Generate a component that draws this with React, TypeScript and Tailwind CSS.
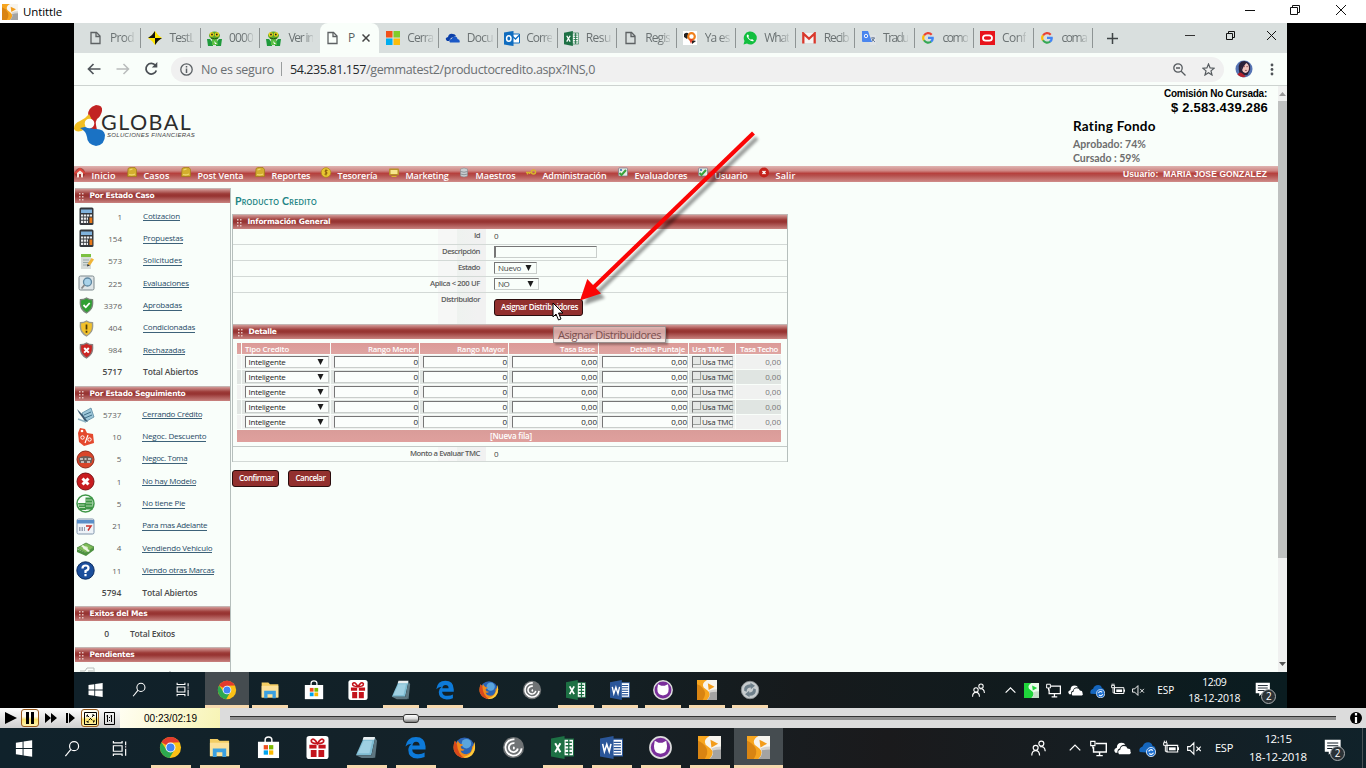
import React, { useLayoutEffect, useRef, useState } from "react";

/** Text whose letter spacing is adjusted so that it spans `w` pixels. */
function Fit({ w, className = "", children }: { w: number; className?: string; children: string }) {
  const ref = useRef<HTMLSpanElement>(null);
  const [ls, setLs] = useState(0);
  useLayoutEffect(() => {
    if (ref.current) {
      const natural = ref.current.getBoundingClientRect().width;
      setLs((w - natural) / children.length);
    }
  }, []);
  return (
    <span ref={ref} className={`inline-block whitespace-pre ${className}`} style={{ letterSpacing: `${ls}px` }}>
      {children}
    </span>
  );
}

/* ---------- favicons ---------- */

const svg = "block shrink-0";

const PageIcon = () => (
  <svg className={svg} width="14" height="16" viewBox="0 0 14 16" fill="none" stroke="#5d6163" strokeWidth="1.3">
    <path d="M2 2.500h5.500l3.500 3.500v7.500H2z" />
    <path d="M7 2.500v4h4" />
  </svg>
);
const TestIcon = () => (
  <svg className={svg} width="14" height="14" viewBox="0 0 14 14">
    <path d="M7 0l3 4 4 3-4 3-3 4-3-4-4-3 4-3z" fill="#ffe600" />
    <path d="M7 7H0l4-3 3-4zM7 7h7l-4 3-3 4z" fill="#111" />
  </svg>
);
const FrogIcon = () => (
  <svg className={svg} width="15" height="15" viewBox="0 0 15 15">
    <path d="M0 8l3 0 3 4v3H1zM15 8l-3 0-3 4v3h5z" fill="#1f9a3c" />
    <path d="M5 8h5l1 6H5z" fill="#5bbf45" />
    <path d="M7 10l3 3H8z" fill="#fff" />
    <ellipse cx="7.5" cy="4.500" rx="5.500" ry="4" fill="#5aa82f" />
    <circle cx="4.800" cy="3.500" r="2.200" fill="#f0d41c" />
    <circle cx="10" cy="3.500" r="2.200" fill="#f0d41c" />
    <circle cx="5" cy="3.500" r=".9" fill="#222" />
    <circle cx="9.800" cy="3.500" r=".9" fill="#222" />
    <path d="M4 7q3.500 1.500 7 0" stroke="#1c5a14" fill="none" />
  </svg>
);
const MsIcon = () => (
  <svg className={svg} width="14" height="14" viewBox="0 0 14 14">
    <path d="M0 0h6.500v6.500H0z" fill="#f1511b" />
    <path d="M7.500 0H14v6.500H7.500z" fill="#80cc28" />
    <path d="M0 7.500h6.500V14H0z" fill="#00adef" />
    <path d="M7.500 7.500H14V14H7.500z" fill="#fbbc09" />
  </svg>
);
const DriveIcon = () => (
  <svg className={svg} width="15" height="12" viewBox="0 0 15 12">
    <path d="M2 9Q-1 6 3 5q1-4 5-3 2 0 3 2L6 6 4 9z" fill="#0b3fa8" />
    <path d="M5 10.500Q3 7.500 6.500 7q1-3 4-2.500 2 .5 2 2.500 3 .5 2 3.500z" fill="#1b58c6" />
  </svg>
);
const OutlookIcon = () => (
  <svg className={svg} width="16" height="15" viewBox="0 0 16 15">
    <path d="M8 3h7.500v9H8z" fill="#fff" stroke="#0f6cbf" />
    <path d="M8 5l3.500 3L15.500 4" stroke="#0f6cbf" fill="none" strokeWidth="1.300" />
    <path d="M0 1.500L9.500 0v15L0 13.500z" fill="#0f6cbf" />
    <ellipse cx="4.800" cy="7.500" rx="2.200" ry="2.800" fill="none" stroke="#fff" strokeWidth="1.500" />
  </svg>
);
function OfficeIcon({ color, letter, s = 15 }: { color: string; letter: "X" | "W"; s?: number }) {
  return (
    <svg className={svg} width={s} height={s} viewBox="0 0 22 22">
      <path d="M11 3h10.500v16H11z" fill="#fff" stroke={color} />
      {letter === "X" ? (
        <path d="M14 6h6M14 9.300h6M14 12.600h6M14 16h6M17 3v16" stroke={color} strokeWidth="1.300" />
      ) : (
        <path d="M13 6h7M13 8.600h7M13 11.200h7M13 13.800h7M13 16.400h7" stroke={color} strokeWidth="1.200" />
      )}
      <path d="M0 2.500L13 0v22L0 19.500z" fill={color} />
      {letter === "X" ? (
        <path d="M4 7l5 8.500M9 7l-5 8.500" stroke="#fff" strokeWidth="1.900" />
      ) : (
        <path d="M2.500 7.500l1.700 7.500 2.300-7 2.300 7 1.700-7.500" stroke="#fff" strokeWidth="1.500" fill="none" />
      )}
    </svg>
  );
}
const YaIcon = () => (
  <svg className={svg} width="14" height="14" viewBox="0 0 14 14">
    <path d="M0 0h14v14H0z" fill="#fff" />
    <path d="M1 3q4-3 5 1L4 8 1 6zM9 9l4 1-4 3z" fill="#222" />
    <circle cx="8.500" cy="5.500" r="3.300" fill="none" stroke="#f07f1a" strokeWidth="2.200" />
    <path d="M6 8l2 5 2-5z" fill="#e2402b" />
  </svg>
);
const WhatsIcon = () => (
  <svg className={svg} width="14" height="14" viewBox="0 0 14 14">
    <path d="M0.500 13.500l1-3.500A6.500 6.500 0 1 1 4 12.600z" fill="#12bf3f" />
    <path d="M4.500 3.500q-2 1.500 1 4.500t5 2.200q1-1-1.500-2.200l-1 .8Q6 8 5.300 6l.7-1q-.6-2-1.500-1.500z" fill="#fff" />
  </svg>
);
const GmailIcon = () => (
  <svg className={svg} width="14" height="12" viewBox="0 0 14 12">
    <path d="M0 1h14v10H0z" fill="#f4f4f4" />
    <path d="M1.300 11.500V1.500L7 6.800l5.700-5.300v10" fill="none" stroke="#d8382c" strokeWidth="2.300" />
  </svg>
);
const TranslateIcon = () => (
  <svg className={svg} width="14" height="14" viewBox="0 0 14 14">
    <path d="M6 4h8v10H8z" fill="#dfe3e6" />
    <path d="M9 7h4M11 6v1M9.500 11l3-4M10 8l3 3" stroke="#6d7f98" fill="none" />
    <path d="M0 0h6l4 11H1q-1 0-1-1z" fill="#4a86ee" />
    <circle cx="4" cy="5" r="1.700" fill="none" stroke="#fff" strokeWidth=".9" />
  </svg>
);
const GoogleIcon = () => (
  <svg className={svg} width="12" height="12" viewBox="0 0 12 12" fill="none" strokeWidth="2.200">
    <path d="M9.700 2.700A4.800 4.800 0 0 0 2 3.500" stroke="#ea4335" />
    <path d="M2 3.300a4.800 4.800 0 0 0 0 5.200" stroke="#fbbc05" />
    <path d="M2 8.300a4.800 4.800 0 0 0 7.200 1.200" stroke="#34a853" />
    <path d="M9 9.700Q11 8 10.700 5.800H6" stroke="#4285f4" />
  </svg>
);
const OracleIcon = () => (
  <svg className={svg} width="15" height="14" viewBox="0 0 15 14">
    <path d="M0 0h15v14H0z" fill="#e8141b" />
    <rect x="3" y="4.300" width="9" height="5.400" rx="2.700" fill="none" stroke="#fff" strokeWidth="1.800" />
  </svg>
);

const tabs: { icon: React.ReactNode; label: string; w?: number; active?: boolean; bar?: boolean }[] = [
  { icon: <PageIcon />, label: "Prod", bar: true },
  { icon: <TestIcon />, label: "TestL", w: 25, bar: true },
  { icon: <FrogIcon />, label: "0000", w: 24, bar: true },
  { icon: <FrogIcon />, label: "Ver in" , w: 25 },
  { icon: <PageIcon />, label: "P", active: true },
  { icon: <MsIcon />, label: "Cerra", w: 26, bar: true },
  { icon: <DriveIcon />, label: "Docu", w: 26, bar: true },
  { icon: <OutlookIcon />, label: "Corre", w: 26, bar: true },
  { icon: <OfficeIcon color="#1d7044" letter="X" />, label: "Resu", w: 25, bar: true },
  { icon: <PageIcon />, label: "Regis", w: 25, bar: true },
  { icon: <YaIcon />, label: "Ya es", w: 25, bar: true },
  { icon: <WhatsIcon />, label: "What", w: 25, bar: true },
  { icon: <GmailIcon />, label: "Recib", w: 25, bar: true },
  { icon: <TranslateIcon />, label: "Tradu", w: 25, bar: true },
  { icon: <GoogleIcon />, label: "como", w: 25, bar: true },
  { icon: <OracleIcon />, label: "Conf", w: 24, bar: true },
  { icon: <GoogleIcon />, label: "coma", w: 25, bar: true },
];

const WinControls = ({ className = "" }: { className?: string }) => (
  <svg className={`${svg} ${className}`} width="102" height="12" viewBox="0 0 102 12" fill="none" stroke="#111" strokeWidth="1">
    <path d="M0 6.500h10" />
    <path d="M45.500 3.500h7v7h-7zM47.500 3.500v-2h7v7h-2" />
    <path d="M91 1l10 10M101 1L91 11" />
  </svg>
);

function BrowserTabs() {
  return (
    <div className="flex h-[30px] items-stretch bg-[#d9dfde] pl-[8px]">
      <div className="flex w-[1011px]">
        {tabs.map((t, i) => (
          <div
            key={i}
            className={
              t.active
                ? "flex flex-1 items-center rounded-t-lg bg-[#f9fefa] pl-[6px]"
                : "flex flex-1 items-center pl-[6px]"
            }
          >
            <div className="flex w-[15px] justify-center">{t.icon}</div>
            {t.active ? (
              <>
                <span className="ml-[7px] text-[12px] text-[#5a5f61]">{t.label}</span>
                <svg className="ml-[7px] block" width="8" height="8" viewBox="0 0 8 8" stroke="#444" strokeWidth="1.500">
                  <path d="M.5.5l7 7M7.500.500l-7 7" />
                </svg>
              </>
            ) : (
              <Fit
                w={t.w ?? 24}
                className="ml-[7px] text-[12px] text-[#6b7273] [mask-image:linear-gradient(to_right,black_60%,rgba(0,0,0,0.200))]"
              >
                {t.label}
              </Fit>
            )}
            {t.bar && <div className="ml-auto h-[20px] w-px bg-[#8e9494]" />}
          </div>
        ))}
      </div>
      <svg className="mt-[10px] ml-[14px] block" width="11" height="11" viewBox="0 0 11 11" stroke="#3f4446" strokeWidth="1.500">
        <path d="M5.500 0v11M0 5.500h11" />
      </svg>
      <svg className="mt-[6px] ml-[67px] block" width="93" height="13" viewBox="0 0 93 13" fill="none" stroke="#111" strokeWidth="1">
        <path d="M0 6.500h10" stroke="#333" />
        <path d="M41.500 4.500h6v6h-6zM43.500 4.500v-2h6v6h-2" />
        <path d="M82 2l9 9M91 2l-9 9" />
      </svg>
    </div>
  );
}

function Toolbar() {
  return (
    <div className="flex h-[33px] items-center border-b border-[#cdd3d0] bg-[#f9fefa] pl-[13px]">
      <svg className="block" width="14" height="12" viewBox="0 0 14 12" fill="none" stroke="#50555a" strokeWidth="1.700">
        <path d="M13.500 6H1.500M6.500 1l-5 5 5 5" />
      </svg>
      <svg className="ml-[15px] block" width="14" height="12" viewBox="0 0 14 12" fill="none" stroke="#b9bcbc" strokeWidth="1.500">
        <path d="M.5 6h12M7.500 1l5 5-5 5" />
      </svg>
      <svg className="ml-[14px] block" width="14" height="14" viewBox="0 0 14 14" fill="none" stroke="#4a4f54" strokeWidth="1.800">
        <path d="M11.500 3.500A5.300 5.300 0 1 0 12.300 8.500" />
        <path d="M13.300 0v5.500H7.800z" fill="#4a4f54" stroke="none" />
      </svg>
      <div className="ml-[13px] flex h-[25px] w-[1053px] items-center rounded-full bg-[#f0f0f0] pl-[9px] text-[12.500px] text-[#6a6f72]">
        <svg className="block" width="13" height="13" viewBox="0 0 13 13" fill="none" stroke="#5b6064" strokeWidth="1.300">
          <circle cx="6.500" cy="6.500" r="5.700" />
          <path d="M6.500 5.500V10M6.500 3v1.500" strokeWidth="1.500" />
        </svg>
        <Fit w={73} className="mt-[2px] ml-[8px]">No es seguro</Fit>
        <div className="mr-[8px] ml-[7px] h-[14px] w-px bg-[#9a9d9e]" />
        <Fit w={76} className="mt-[2px] text-[#24282b]">54.235.81.157</Fit>
        <Fit w={229} className="mt-[2px]">/gemmatest2/productocredito.aspx?INS,0</Fit>
        <svg className="ml-auto block" width="13" height="13" viewBox="0 0 13 13" fill="none" stroke="#555a5e" strokeWidth="1.300">
          <circle cx="5" cy="5" r="4.200" />
          <path d="M8.200 8.200l4.300 4.300M3 5h4" />
        </svg>
        <svg className="mr-[9px] ml-[16px] block" width="13" height="13" viewBox="0 0 13 13" fill="none" stroke="#555a5e" strokeWidth="1.200">
          <path d="M6.500 1l1.600 3.900 4.100.3-3.200 2.700 1 4.100-3.500-2.200L3 12l1-4.100L.8 5.200l4.100-.3z" />
        </svg>
      </div>
      <svg className="ml-[11px] block" width="18" height="18" viewBox="0 0 19 19">
        <circle cx="9.500" cy="9.500" r="9" fill="#5674b4" />
        <path d="M4 10Q3 1 10 1q7 1 6 9l-3 6H5z" fill="#2a2038" />
        <ellipse cx="11" cy="8.500" rx="3.800" ry="5.300" fill="#efc4be" />
        <path d="M2.500 15q3-3 5-1l4 3.500q-6 2-9-2.500z" fill="#b3202c" />
        <path d="M7 3h5l-3 4-2 5z" fill="#2a2038" />
        <path d="M9 7h1.500M12 7h1.500M10.500 11h2" stroke="#7a2f3a" strokeWidth=".8" />
      </svg>
      <svg className="ml-[17px] block" width="4" height="13" viewBox="0 0 4 13" fill="#4f5458">
        <circle cx="2" cy="2" r="1.400" />
        <circle cx="2" cy="6.500" r="1.400" />
        <circle cx="2" cy="11" r="1.400" />
      </svg>
    </div>
  );
}

/* ---------- page header ---------- */

const Logo = () => (
  <svg className={svg} width="32" height="42" viewBox="0 0 32 42">
    <path d="M14 11Q13 3 22 0q7 0 6 6-1 5-5 8-2 3-1 6l1 5H16z" fill="#c22423" />
    <path d="M0 24q0-6 6-8 6-3 9-7l3 6-6 4-1 5q-8 5-11 0z" fill="#f2bf22" />
    <path d="M6 23l5-1 9 2q10-1 11 6 0 10-9 11-9-2-9-9-1-6-7-9z" fill="#1a72c4" />
    <circle cx="15.500" cy="18.500" r="4.800" fill="#f9fefa" />
  </svg>
);

const navIcons = {
  home: (
    <>
      <circle cx="5.500" cy="6" r="5" fill="#8c2a24" opacity=".7" />
      <path d="M0 6l5.500-5.500L11 6l-1.500 1L5.500 3.500 1.500 7z" fill="#e2443a" />
      <path d="M2.500 6l3-2.500 3 2.500v4.500h-6z" fill="#f6e6de" />
      <path d="M4.500 7h2v3.500h-2z" fill="#a33" />
    </>
  ),
  doc: (
    <>
      <path d="M1.500 1.500l2-1 5 0 1.500 2v7h-9z" fill="#d3ae2e" stroke="#9f7a18" strokeWidth=".7" />
      <path d="M3 3l3-1M2.500 7.500q3 1 6-.500" stroke="#efd873" strokeWidth="1.200" fill="none" />
    </>
  ),
  coin: (
    <>
      <circle cx="5.500" cy="5.500" r="4.800" fill="#e8c630" stroke="#a78618" strokeWidth=".7" />
      <path d="M7 3.500Q4.500 2.500 4.500 4t2 1.500q1 1.500-2.500 1.700M5.500 2.500v6" stroke="#8a5c10" fill="none" />
    </>
  ),
  tv: (
    <>
      <rect x=".5" y="1.500" width="10" height="7" rx="1" fill="#b8912a" />
      <rect x="2" y="3" width="7" height="4" fill="#f6e58c" />
      <path d="M3 9.500h5" stroke="#d9b32c" />
    </>
  ),
  db: (
    <>
      <path d="M2 2q3.500-2 7 0v7q-3.500 2-7 0z" fill="#c9cdd0" stroke="#858b90" strokeWidth=".6" />
      <path d="M2 4.500q3.500 1.500 7 0M2 7q3.500 1.500 7 0" stroke="#7c8388" fill="none" strokeWidth=".8" />
    </>
  ),
  key: (
    <>
      <circle cx="8" cy="5" r="2" fill="none" stroke="#d8b52c" strokeWidth="1.500" />
      <path d="M6 5.500H.5M2 5.500v2M4 5.500v1.500" stroke="#d8b52c" strokeWidth="1.300" />
    </>
  ),
  check: (
    <>
      <rect x="1" y="1" width="9" height="8" rx="1" fill="#e6ece6" stroke="#778" strokeWidth=".7" />
      <path d="M2 6l2 2 4.500-5" stroke="#3aa33a" strokeWidth="2" fill="none" />
      <circle cx="3.500" cy="3" r="1.100" fill="#3a70b8" />
    </>
  ),
  exit: (
    <>
      <circle cx="5.500" cy="5.500" r="5" fill="#c4211a" />
      <path d="M4 4l3 3M7 4L4 7" stroke="#fff" strokeWidth="1.400" />
    </>
  ),
};

const nav: { k: keyof typeof navIcons; label: string; w: number; cls: string }[] = [
  { k: "home", label: "Inicio", w: 24, cls: "w-[52px]" },
  { k: "doc", label: "Casos", w: 26, cls: "w-[54px]" },
  { k: "doc", label: "Post Venta", w: 46, cls: "w-[74px]" },
  { k: "doc", label: "Reportes", w: 39, cls: "w-[66px]" },
  { k: "coin", label: "Tesorería", w: 40, cls: "w-[68px]" },
  { k: "tv", label: "Marketing", w: 43, cls: "w-[70px]" },
  { k: "db", label: "Maestros", w: 40, cls: "w-[67px]" },
  { k: "key", label: "Administración", w: 64, cls: "w-[92px]" },
  { k: "check", label: "Evaluadores", w: 53, cls: "w-[80px]" },
  { k: "check", label: "Usuario", w: 33, cls: "w-[61px]" },
  { k: "exit", label: "Salir", w: 20, cls: "w-[40px]" },
];

function PageHeader() {
  return (
    <>
      <div className="flex h-[80px] justify-between">
        <div className="flex pt-[19px]">
          <Logo />
          <div className="-ml-[5px] flex flex-col pt-[7px]">
            <Fit w={96} className="h-[20px] font-['Lato'] text-[21.500px] leading-[20px] text-[#2d2d2d]">GLOBAL</Fit>
            <Fit w={88} className="ml-[6px] h-[8px] font-['Liberation_Sans'] text-[6px] leading-[6px] text-[#444] italic">
              SOLUCIONES FINANCIERAS
            </Fit>
          </div>
        </div>
        <div className="mr-[10px] flex flex-col">
          <div className="flex flex-col items-end font-['Liberation_Sans'] font-bold text-black">
            <Fit w={103} className="mt-[2px] mr-px text-[10px] leading-[12px]">Comisión No Cursada:</Fit>
            <Fit w={97} className="text-[13px] leading-[15px]">$ 2.583.439.286</Fit>
          </div>
          <div className="-ml-[91px] flex flex-col items-start font-['Lato'] font-bold">
            <Fit w={83} className="mt-[3px] text-[13.500px] leading-[17px] text-black">Rating Fondo</Fit>
            <Fit w={73} className="mt-[2px] text-[10.500px] leading-[14px] text-[#6d6d6d]">Aprobado: 74%</Fit>
            <Fit w={67} className="text-[10.500px] leading-[14px] text-[#6d6d6d]">Cursado : 59%</Fit>
          </div>
        </div>
      </div>
      <div className="flex h-[16px] shrink-0 bg-[linear-gradient(#dfb4b1_0%,#cf8683_30%,#b6403d_46%,#b5504d_60%,#d08d8a_100%)]">
        {nav.map((n) => (
          <div key={n.label} className={`flex shrink-0 ${n.cls}`}>
            <svg className="mt-px block shrink-0" width="12" height="11" viewBox="0 0 11 11">
              {navIcons[n.k]}
            </svg>
            <Fit w={n.w} className="ml-[5.500px] text-[9px] leading-[19px] font-semibold text-white">
              {n.label}
            </Fit>
          </div>
        ))}
        <div className="mr-[11px] ml-auto flex font-['Liberation_Sans'] font-bold text-white">
          <Fit w={144} className="text-[8.500px] leading-[17px]">{"Usuario:  MARIA JOSE GONZALEZ"}</Fit>
        </div>
      </div>
    </>
  );
}

/* ---------- sidebar ---------- */

function Bar({ title, w, className = "" }: { title: string; w: number; className?: string }) {
  return (
    <div
      className={`flex h-[15px] shrink-0 items-center border-t border-[#c4b5b2] bg-[linear-gradient(#d39a97_0%,#9c3a37_35%,#963331_50%,#c98380_100%)] pl-[4px] ${className}`}
    >
      <svg className="mt-[3px] block" width="5" height="9" viewBox="0 0 5 9" fill="#e6c3c1">
        <path d="M0 0h1.500v1.500H0zM3 0h1.500v1.500H3zM0 3h1.500v1.500H0zM3 3h1.500v1.500H3zM0 6h1.500v1.500H0zM3 6h1.500v1.500H3z" />
      </svg>
      <Fit w={w} className="ml-[5.500px] font-['DejaVu_Sans'] text-[7.500px] leading-[12px] font-bold text-white">
        {title}
      </Fit>
    </div>
  );
}

const calc = (
  <>
    <rect x="2.500" y=".5" width="14" height="17.500" rx="1.500" fill="#34383d" />
    <rect x="4" y="2.500" width="11" height="3.500" fill="#7fb2dc" />
    <path d="M4 8.500h11M4 11.700h7M4 14.900h7" stroke="#eceeee" strokeWidth="2.200" strokeDasharray="2.300 .7" />
    <rect x="12.500" y="10.500" width="2.800" height="5.500" fill="#e8791a" />
  </>
);
const shield = (c: string, d: string, mark: React.ReactNode) => (
  <>
    <path
      d="M9.500 2Q12 3.800 15.500 3.800q.5 6-1.200 8.700-1.800 2.800-4.800 4.500-3-1.700-4.800-4.500Q3 9.800 3.500 3.800 7 3.800 9.500 2z"
      fill={c}
      stroke={d}
      strokeWidth="1.400"
    />
    {mark}
  </>
);

const stateIcons: React.ReactNode[] = [
  calc,
  calc,
  <>
    <path d="M4 2h10v15H4z" fill="#d6dbd8" />
    <path d="M4 2h10v3H4z" fill="#7cc142" />
    <path d="M6 8h6M6 10.500h6M6 13h5" stroke="#9aa" />
    <path d="M10.500 12l4-6 2.500 1.500-4 6z" fill="#f0b53a" />
    <path d="M10.500 12l-.5 2.500 3-1z" fill="#333" />
  </>,
  <>
    <rect x="2" y="2" width="15" height="14" rx="1.500" fill="#dfe6e8" stroke="#7c888c" />
    <circle cx="10.500" cy="8" r="4" fill="#a9d3ea" stroke="#5f87a0" strokeWidth="1.300" />
    <path d="M7.500 11l-3 3.500" stroke="#888" strokeWidth="1.800" />
  </>,
  shield("#2fa032", "#7a857a", <path d="M6.500 9l2.300 2.300L12.700 7" stroke="#fff" strokeWidth="1.800" fill="none" />),
  shield("#f2c12a", "#9b9a8c", <path d="M9.500 5.500v5M9.500 11.800v2" stroke="#4a3a08" strokeWidth="1.700" />),
  shield("#cc2522", "#8a7d7d", <path d="M7.200 7l4.600 4.600M11.800 7l-4.600 4.600" stroke="#fff" strokeWidth="2" />),
];
const followIcons: React.ReactNode[] = [
  <>
    <path d="M6 8l9-5 3 9-9 5z" fill="#9cc6d8" stroke="#5d8ca2" strokeWidth=".8" />
    <path d="M8 10l7-3M9 13l7-3" stroke="#3f6f88" />
    <path d="M1 4l6 6 5 7-3-1-6-8z" fill="#3c5a72" />
    <path d="M2 14l8 3" stroke="#8fb4c4" strokeWidth="1.500" />
  </>,
  <>
    <path d="M4 1l5 1 2 4 6 1 1 9-10 3-5-4-1-9z" fill="#e4492e" />
    <circle cx="6" cy="4" r="1.300" fill="#fff" />
    <circle cx="6.500" cy="10.500" r="1.700" fill="none" stroke="#fff" />
    <circle cx="13.500" cy="12.500" r="1.700" fill="none" stroke="#fff" />
    <path d="M12 8l-3 8" stroke="#fff" strokeWidth="1.200" />
  </>,
  <>
    <circle cx="9.500" cy="9.500" r="8.500" fill="#d9452a" stroke="#8f2b1b" />
    <path d="M2.500 8q3-2 7-2t7 2l-1 5h-12z" fill="#6b5f5b" />
    <path d="M4 9h3M8.500 9h2M12 9h3M5 12h3M11 12h3" stroke="#ddd" strokeWidth="1.300" />
  </>,
  <>
    <circle cx="9.500" cy="9.500" r="8.500" fill="#c81d20" stroke="#7c1214" />
    <path d="M6.500 6.500l6 6M12.500 6.500l-6 6" stroke="#fff" strokeWidth="3" />
  </>,
  <>
    <circle cx="9.500" cy="9.500" r="8.500" fill="none" stroke="#3f9647" strokeWidth="1.500" />
    <path d="M2 9h8v7H4zM9.500 3.500h7v12h-7z" fill="#3f9647" />
    <path d="M2.500 11h6M3 13.500h6M10 6h6M10 9h6M10 12h6" stroke="#cfe9c6" strokeWidth=".8" />
  </>,
  <>
    <rect x="1" y="2" width="17" height="15" rx="1.500" fill="#eef3f8" stroke="#8296ad" />
    <path d="M1 3h17v3.500H1z" fill="#5a8fc8" />
    <path d="M3 11h6M3 13h6" stroke="#7a869a" strokeDasharray="1.500 1" strokeWidth="1.300" />
    <path d="M10 9h5l-3 4.500" stroke="#c8322c" fill="none" strokeWidth="1.500" />
  </>,
  <>
    <path d="M1 9l9-5 8 4-8 6z" fill="#7dbb57" stroke="#44803a" strokeWidth=".8" />
    <path d="M1 10v3l9 4 8-6V8l-8 6z" fill="#4d9140" />
    <ellipse cx="9.500" cy="9" rx="2.500" ry="1.700" fill="#d4ecc0" />
    <path d="M5 7l7 6 2-1-7-6z" fill="#eef5e6" />
  </>,
  <>
    <circle cx="9.500" cy="9.500" r="8.700" fill="#1c4f9c" stroke="#0c2c60" />
    <path d="M6.500 7.500q0-3 3-3t3 2.500q0 2-3 3v2M9.500 13v2.300" stroke="#fff" strokeWidth="2.200" fill="none" />
  </>,
];

type Row = [string, string, number];
const states: Row[] = [
  ["1", "Cotizacion", 37],
  ["154", "Propuestas", 40],
  ["573", "Solicitudes", 39],
  ["225", "Evaluaciones", 46],
  ["3376", "Aprobadas", 39],
  ["404", "Condicionadas", 52],
  ["984", "Rechazadas", 42],
];
const follow: Row[] = [
  ["5737", "Cerrando Crédito", 60],
  ["10", "Negoc. Descuento", 64],
  ["5", "Negoc. Toma", 45],
  ["1", "No hay Modelo", 54],
  ["5", "No tiene Pie", 43],
  ["21", "Para mas Adelante", 65],
  ["4", "Vendiendo Vehiculo", 70],
  ["11", "Viendo otras Marcas", 72],
];

function SideRows({ rows, icons, total, pad }: { rows: Row[]; icons: React.ReactNode[]; total: string; pad: string }) {
  return (
    <>
      {rows.map(([n, label, w], i) => (
        <div key={label} className={`flex h-[22.300px] items-center ${pad}`}>
          <svg className="block shrink-0" width="19" height="19" viewBox="0 0 19 19">
            {icons[i]}
          </svg>
          <span className="w-[26px] text-right text-[8px] leading-[10px] text-[#5f5f5f]">{n}</span>
          <Fit w={w} className="ml-[21px] border-b border-[#3d6279] text-[8px] leading-[8.500px] text-[#1f4a66]">
            {label}
          </Fit>
        </div>
      ))}
      <div className={`flex h-[22.300px] items-center text-[8.500px] font-semibold text-[#4a4a4a] ${pad}`}>
        <span className="w-[45px] text-right">{total}</span>
        <Fit w={55} className="ml-[21px]">Total Abiertos</Fit>
      </div>
    </>
  );
}

function Sidebar() {
  return (
    <div className="flex w-[157px] shrink-0 flex-col overflow-hidden border-r border-[#b6bfbc] pl-px">
      <Bar title="Por Estado Caso" w={65} />
      <div className="h-[182.500px] shrink-0 pt-[2.500px]">
        <SideRows rows={states} icons={stateIcons} total="5717" pad="pl-[2px]" />
      </div>
      <Bar title="Por Estado Seguimiento" w={96} />
      <div className="h-[205px] shrink-0 pt-[3px]">
        <SideRows rows={follow} icons={followIcons} total="5794" pad="pl-[1.300px]" />
      </div>
      <Bar title="Exitos del Mes" w={58} />
      <div className="flex h-[26px] shrink-0 items-center pt-px text-[8.500px] font-semibold text-[#4a4a4a]">
        <span className="w-[34px] text-right">0</span>
        <Fit w={45} className="ml-[21px]">Total Exitos</Fit>
      </div>
      <Bar title="Pendientes" w={45} />
      <svg className="mt-[5px] ml-[4px] block shrink-0" width="92" height="16" viewBox="0 0 92 16" fill="none" stroke="#b9bebc">
        <path d="M1 4h5l2-3h7v15M9 4h5" />
        <path d="M91 4.500v2" stroke="#555" />
      </svg>
    </div>
  );
}

/* ---------- product form ---------- */

const sunken = "border border-t-[#767676] border-l-[#767676] border-r-[#c9cecb] border-b-[#c9cecb]";

function Button({ label, w, className }: { label: string; w: number; className: string }) {
  return (
    <button
      className={`flex h-[17px] items-center justify-center rounded-[3px] border border-[#2a0d0d] bg-[#92302e] pb-[2px] pl-[2px] text-[8px] leading-[10px] font-semibold text-white ${className}`}
    >
      <Fit w={w}>{label}</Fit>
    </button>
  );
}

function Field({ label, w, h, last, children }: { label: string; w: number; h: string; last?: boolean; children: React.ReactNode }) {
  return (
    <div className={`flex shrink-0 ${h} ${last ? "" : "border-b border-[#d3d9d6]"}`}>
      <div className="flex w-[253px] justify-end bg-[linear-gradient(to_right,transparent_205px,#f6f7f6_205px,#f6f7f6_224px,#eef2ef_224px,#f1f1f1_245px)] pr-[6px]">
        <Fit w={w} className="mt-px h-[10px] text-[7.700px] leading-[10px] font-semibold text-[#5d5d5d]">{label}</Fit>
      </div>
      <div className="flex items-center pb-[2px] pl-[8px] text-[8px] leading-[10px] text-[#444]">{children}</div>
    </div>
  );
}

const Caret = () => (
  <svg className="mr-[4px] ml-auto block shrink-0" width="7" height="6" viewBox="0 0 7 6">
    <path d="M.5 0h6L3.500 6z" fill="#1d1d1d" />
  </svg>
);

const gridCols = "grid grid-cols-[4px_88px_88px_88px_89px_89px_46px_45px] gap-x-px";
const headCell = "flex items-center bg-[linear-gradient(#dc9a97,#dfa5a2)] text-[7.800px] leading-[10px] font-semibold text-white";

function Detail() {
  const heads: [string, number, string][] = [
    ["Tipo Credito", 44, "pl-[3px]"],
    ["Rango Menor", 48, "justify-end pr-[3px]"],
    ["Rango Mayor", 48, "justify-end pr-[3px]"],
    ["Tasa Base", 35, "justify-end pr-[3px]"],
    ["Detalle Puntaje", 55, "justify-end pr-[3px]"],
    ["Usa TMC", 32, "pl-[3px]"],
    ["Tasa Techo", 38, "justify-end pr-[3px]"],
  ];
  return (
    <div className="w-[544px] pt-[4px]">
      <div className={`${gridCols} h-[11px]`}>
        <div className={headCell} />
        {heads.map(([t, w, c]) => (
          <div key={t} className={`${headCell} ${c}`}>
            <Fit w={w}>{t}</Fit>
          </div>
        ))}
      </div>
      {[0, 1, 2, 3, 4].map((r) => {
        const cell = r % 2 ? "bg-[#e0e5e2]" : "bg-[#f0f1f0]";
        const num = (v: string) => (
          <div className={`${cell} py-px pl-[3px]`}>
            <div className={`${sunken} flex h-[12px] items-center justify-end bg-[#fbfefc] text-[8px] leading-[10px] text-[#222]`}>{v}</div>
          </div>
        );
        return (
          <div key={r} className={`${gridCols} mt-px h-[14.100px]`}>
            <div className={cell} />
            <div className={`${cell} py-px pr-[1px] pl-[3px]`}>
              <div className={`${sunken} flex h-[12px] items-center bg-[#fbfefc] pl-[2.500px] text-[8px] leading-[10px] text-[#222]`}>
                <Fit w={37}>Inteligente</Fit>
                <Caret />
              </div>
            </div>
            {num("0")}
            {num("0")}
            {num("0,00")}
            {num("0,00")}
            <div className={`${cell} py-px pr-[2px] pl-[3px]`}>
              <div className={`${sunken} flex h-[12px] text-[8px] leading-[10px] text-[#333]`}>
                <div className="h-[8px] w-[8px] shrink-0 border-r border-b border-[#9a9f9c] bg-[#e4e7e5]" />
                <Fit w={31} className="ml-[1px] h-[10px]">Usa TMC</Fit>
              </div>
            </div>
            <div className={`${cell} flex items-center justify-end text-[8px] leading-[10px] text-[#777]`}>0,00</div>
          </div>
        );
      })}
      <div className="mt-[1px] flex h-[12px] items-center justify-center bg-[linear-gradient(#d99c99,#dfa09d)] pl-[4px] text-[8px] leading-[10px] font-semibold text-white">
        <Fit w={42}>[Nueva fila]</Fit>
      </div>
    </div>
  );
}

function MainPanel() {
  return (
    <div className="flex flex-col pt-[7px] pl-[1px]">
      <Fit w={82} className="ml-[3px] h-[12px] self-start font-['Lato'] text-[10.500px] leading-[12px] font-bold text-[#1f8585] [font-variant:small-caps]">
        Producto Credito
      </Fit>
      <div className="mt-[7px] flex w-[556px] flex-col border-x border-[#b6bfbc]">
        <Bar title="Información General" w={83} />
        <Field label="Id" w={6} h="h-[16px]">
          <span className="mt-px">0</span>
        </Field>
        <Field label="Descripción" w={38} h="h-[16px]">
          <div className={`${sunken} h-[12px] w-[103px] border-l-2 border-l-[#222]`} />
        </Field>
        <Field label="Estado" w={22} h="h-[16px]">
          <div className={`${sunken} flex h-[12px] w-[43px] items-center pl-[3px]`}>
            <Fit w={23}>Nuevo</Fit>
            <Caret />
          </div>
        </Field>
        <Field label="Aplica < 200 UF" w={50} h="h-[16px]">
          <div className={`${sunken} flex h-[12px] w-[45px] items-center pl-[3px]`}>
            <Fit w={11}>NO</Fit>
            <Caret />
          </div>
        </Field>
        <Field label="Distribuidor" w={39} h="h-[31px]" last>
          <Button label="Asignar Distribuidores" w={77} className="w-[89px]" />
        </Field>
        <Bar title="Detalle" w={28} className="pl-[5px]" />
        <div className="flex h-[108px] justify-start border-b border-[#c2c9c6] pl-[4px]">
          <Detail />
        </div>
        <Field label="Monto a Evaluar TMC" w={70} h="h-[15px]">
          <span className="mt-px">0</span>
        </Field>
      </div>
      <div className="mt-[8px] flex gap-[9px]">
        <Button label="Confirmar" w={35} className="w-[47px]" />
        <Button label="Cancelar" w={30} className="w-[43px]" />
      </div>
    </div>
  );
}

/* ---------- taskbars ---------- */

const TI = ({ children, s = 24 }: { children: React.ReactNode; s?: number }) => (
  <svg className={svg} width={s} height={s} viewBox="0 0 24 24">
    {children}
  </svg>
);

const icons = {
  win: (
    <path d="M3 6l7-1v6.500H3zM11 4.800L20 3.500v8h-9zM3 12.500h7V19l-7-1zM11 12.500h9v8l-9-1.300z" fill="#fff" />
  ),
  search: (
    <g fill="none" stroke="#fff" strokeWidth="1.500">
      <circle cx="14" cy="9" r="5.700" />
      <path d="M10 13l-7 8.500" />
    </g>
  ),
  view: (
    <g fill="none" stroke="#fff" strokeWidth="1.500">
      <path d="M3 8.500h11v7H3zM3 2.500v2.500h11V2.500M3 21.500V19h11v2.500M18.500 3v18" />
      <path d="M17 8.500h3v3h-3z" fill="#fff" stroke="#15202a" />
    </g>
  ),
  chrome: (
    <>
      <circle cx="12" cy="12" r="11" fill="#fbc116" />
      <path d="M12 12L2.500 6.500A11 11 0 0 1 21.500 6.500L12 7z" fill="#e33b2e" />
      <path d="M2.500 6.500A11 11 0 0 0 11 23l5-8.500-8 0z" fill="#2da94f" />
      <circle cx="12" cy="12" r="5.200" fill="#fff" />
      <circle cx="12" cy="12" r="4.200" fill="#4285f4" />
    </>
  ),
  folder: (
    <>
      <path d="M2 3h8l2 2h10v16H2z" fill="#f3cd63" />
      <path d="M2 7h20v14H2z" fill="#fce19a" />
      <path d="M5 22v-9h14v9h-4v-5H9v5z" fill="#3ba0e0" />
    </>
  ),
  store: (
    <>
      <path d="M8.500 7V4q0-3 3.500-3t3.500 3v3" fill="none" stroke="#fff" strokeWidth="1.500" />
      <path d="M1 6h22v17H1z" fill="#fff" />
      <path d="M7 9.500h4.500V14H7z" fill="#f04e1f" />
      <path d="M12.500 9.500H17V14h-4.500z" fill="#7db900" />
      <path d="M7 15h4.500v4.500H7z" fill="#00a3ee" />
      <path d="M12.500 15H17v4.500h-4.500z" fill="#fdb900" />
    </>
  ),
  gift: (
    <>
      <rect x=".500" y="0" width="23" height="24" rx="3" fill="#fff" />
      <path d="M3.500 9h7.500v4H3.500zM13 9h7.500v4H13zM5 14.500h6V22H5zM13 14.500h6V22h-6z" fill="#c3131c" />
      <path d="M12 8Q5 8 5.500 4.500 8 1 12 8q4-7 6.500-3.500Q19 8 12 8z" fill="none" stroke="#c3131c" strokeWidth="1.800" />
    </>
  ),
  note: (
    <>
      <path d="M9 2h12l-4 18H1z" fill="#7fbcd2" />
      <path d="M9 1h12l-1 3H8z" fill="#e9eef0" />
      <path d="M9 5h9l-3 13H3z" fill="#9fd0e2" />
      <path d="M21 2l2 3-2 18-4-2zM1 20l16 0 3 3H7z" fill="#5d7680" />
    </>
  ),
  edge: (
    <path
      d="M1.500 11Q3 1 12.500 1 22 1 22.500 11v3H8.500q.5 5 6.500 5 4 0 6.500-1.700V22Q18 23.500 14 23.500 4.500 23 4.500 14.500q0-4 3.500-6.500Q4 8 1.500 11zM8.800 10h7.500q0-4-3.700-4-3.300 0-3.800 4z"
      fill="#0d7ad9"
    />
  ),
  fox: (
    <>
      <circle cx="12" cy="12" r="10.500" fill="#2b63b5" />
      <circle cx="14" cy="8" r="5" fill="#5aa5de" />
      <path d="M2 5Q-2 15 5 20.500 14 26 20.500 19q4-5 1.500-13 0 4-2 5 0 7-6 8-5 0-6-4 3 1 4-1-4 0-4-3l3-2Q7 9 5 5q-1 1-1 3z" fill="#f08a1c" />
      <path d="M22 6q3 8-2.500 14-5 4-11 2 8 0 11-6 3-5 2.500-10z" fill="#fccb3a" />
      <path d="M2 5Q-2 15 5 20.500 8 23 12 23 5 19 4 8z" fill="#d9481c" />
    </>
  ),
  swirl: (
    <>
      <circle cx="12" cy="12" r="11" fill="#6f7375" />
      <path d="M13 3.500A8.500 8.500 0 1 0 20.500 13M13 7.500A4.700 4.700 0 1 0 16.500 13M13 11.500q-1.500 1 0 2" fill="none" stroke="#fff" strokeWidth="1.900" />
    </>
  ),
  cat: (
    <>
      <circle cx="12" cy="12" r="11" fill="#7a2e9b" stroke="#ddd" strokeWidth="1.800" />
      <path d="M6 5l4 2h4l4-2 .8 5.500Q19 18 12 18.500 5 18 5.200 10.500z" fill="#fff" />
    </>
  ),
  s: (
    <>
      <path d="M0 0h24v24H0z" fill="#f7a51f" />
      <path d="M0 5q6 2 9 8 2 5-2 11H0z" fill="#d98412" />
      <path d="M12 0Q5 4 8 9l5 4q5 4-1 11h12V0z" fill="#f7f4ee" />
      <path d="M24 13q-6 0-9 2 2 4-3 9h12z" fill="#a3a3a3" />
      <path d="M24 11q-6 0-10 2l1 2q4-1 9-1z" fill="#d4d3d0" />
      <path d="M13 4l8 4-7 4z" fill="#f39c1a" />
    </>
  ),
  sGreen: (
    <>
      <path d="M0 0h24v24H0z" fill="#1fd43a" />
      <path d="M12 0Q5 4 8 9l5 4q5 4-1 11h12V0z" fill="#eafbea" />
      <path d="M24 13q-6 0-9 2 2 4-3 9h12z" fill="#c3dcc6" />
      <path d="M13 4l8 4-7 4z" fill="#1fd43a" />
    </>
  ),
  ball: (
    <>
      <circle cx="12" cy="12" r="10.500" fill="#c7ccce" stroke="#8b9194" />
      <path d="M5 13Q4 5 13 5l-1-2 6 4-5 4v-2q-5 0-5 5zM19 11q1 8-8 8l1 2-6-4 5-4v2q5 0 5-5z" fill="#6f808b" />
    </>
  ),
  people: (
    <g fill="none" stroke="#fff" strokeWidth="1.700">
      <circle cx="8" cy="11" r="3.500" />
      <path d="M2.500 22q0-7 5.500-7t5.500 7" />
      <circle cx="16" cy="5" r="3.500" />
      <path d="M14 9.500q7-1.500 7.500 6.500" />
    </g>
  ),
  chevron: <path d="M3 16l9-9 9 9" fill="none" stroke="#fff" strokeWidth="2.200" />,
  monitor: (
    <g fill="none" stroke="#fff" strokeWidth="2">
      <path d="M8 5h15v12H5v-7M9 22h9M13.500 17v5" />
      <path d="M1 2h6v6H1zM4 8v4" strokeWidth="1.600" />
    </g>
  ),
  cloud: (
    <>
      <path d="M2 18Q-2 13 4 11q0-7 7-7 4 0 5 3-6-1-8 5-4 1-3 6z" fill="#fff" />
      <path d="M7 20q-3-5 2-6.500 0-5 5-5 4 0 5 3.500 5 0 4 4 2 3-1 4z" fill="#fff" />
    </>
  ),
  blueCloud: (
    <>
      <path d="M1 17Q-1 11 5 9q2-6 8-6 5 0 6 5 5 1 4 6l-9 4z" fill="#1566bd" />
      <circle cx="17" cy="17" r="6.500" fill="#1e70d0" stroke="#e8f0fa" strokeWidth="1.200" />
      <path d="M13.500 16q3-4 6-1M20.500 18q-3 4-6 1" stroke="#fff" strokeWidth="1.700" fill="none" />
    </>
  ),
  battery: (
    <>
      <path d="M6 8h16v10H6z" fill="none" stroke="#fff" strokeWidth="1.700" />
      <path d="M9 11h10v4.500H9z" fill="#fff" />
      <path d="M22 11h2v4h-2z" fill="#fff" />
      <path d="M1 4h5v4H1zM3.500 8v9h3M2 1v3M5 1v3" fill="none" stroke="#fff" strokeWidth="1.500" />
    </>
  ),
  mute: (
    <g fill="none" stroke="#fff" strokeWidth="1.700">
      <path d="M1 9h4l6-6v18l-6-6H1zM15 9l7 7M22 9l-7 7" />
    </g>
  ),
  notif: (
    <>
      <path d="M1 1h20v15H10l-4 4v-4H1z" fill="#fff" />
      <path d="M4 5h14M4 8.500h14M4 12h10" stroke="#15202a" strokeWidth="1.300" />
    </>
  ),
};

const dims = { inner: { big: 20 }, outer: { big: 23 } };

function Slot({ size, icon, mark, active, s }: { size: "inner" | "outer"; icon: React.ReactNode; mark?: boolean; active?: boolean; s?: number }) {
  const w = size === "inner" ? "w-[43.650px]" : "w-[49px]";
  return (
    <div className={`flex ${w} shrink-0 flex-col items-center ${active ? "bg-[#454c50]" : ""}`}>
      <div className="flex flex-1 items-center justify-center pt-[2px]">
        {s === 0 ? icon : <TI s={s ?? dims[size].big}>{icon}</TI>}
      </div>
      {mark ? (
        <div className={`h-[3px] bg-[#f6d9ae] ${active ? "w-full" : size === "inner" ? "w-[36px]" : "w-[40px]"}`} />
      ) : (
        <div className="h-[3px]" />
      )}
    </div>
  );
}

function Notif({ s }: { s: number }) {
  return (
    <div className="relative">
      <TI s={s}>{icons.notif}</TI>
      <div className="absolute top-[7px] left-[6px] flex size-[15px] items-center justify-center rounded-full border border-[#a9adaf] bg-[#2b3236] text-[10px] leading-none text-white">
        2
      </div>
    </div>
  );
}

function apps(size: "inner" | "outer") {
  const o = size === "inner" ? 20 : 23;
  return (
    <>
      <Slot size={size} icon={icons.chrome} mark active={size === "inner"} />
      <Slot size={size} icon={icons.folder} mark />
      <Slot size={size} icon={icons.store} />
      <Slot size={size} icon={icons.gift} />
      <Slot size={size} icon={icons.note} mark />
      <Slot size={size} icon={icons.edge} mark />
      <Slot size={size} icon={icons.fox} />
      <Slot size={size} icon={icons.swirl} />
      <Slot size={size} icon={<OfficeIcon color="#1d7044" letter="X" s={o} />} s={0} mark />
      <Slot size={size} icon={<OfficeIcon color="#2a5699" letter="W" s={o} />} s={0} mark />
      <Slot size={size} icon={icons.cat} mark />
      <Slot size={size} icon={icons.s} mark />
    </>
  );
}

function InnerTaskbar() {
  return (
    <div className="flex h-[36px] bg-[linear-gradient(to_right,#10212a,#132126_40%,#161a1c_60%,#0a1c20)]">
      <Slot size="inner" icon={icons.win} />
      <Slot size="inner" icon={icons.search} s={17} />
      <Slot size="inner" icon={icons.view} s={17} />
      {apps("inner")}
      <Slot size="inner" icon={icons.ball} mark />
      <div className="flex flex-1 items-center pl-[199px]">
        <TI s={15}>{icons.people}</TI>
        <div className="ml-[18px] flex w-[141px] items-center justify-between">
          <TI s={13}>{icons.chevron}</TI>
          <TI s={15}>{icons.sGreen}</TI>
          <TI s={15}>{icons.monitor}</TI>
          <TI s={15}>{icons.cloud}</TI>
          <TI s={15}>{icons.blueCloud}</TI>
          <TI s={14}>{icons.battery}</TI>
          <TI s={13}>{icons.mute}</TI>
        </div>
        <Fit w={17} className="ml-[12px] text-[10px] text-white">ESP</Fit>
        <div className="ml-[14px] flex w-[52px] flex-col items-center text-[10.500px] leading-[16px] text-white">
          <Fit w={24}>12:09</Fit>
          <Fit w={52}>18-12-2018</Fit>
        </div>
        <div className="ml-[15px]">
          <Notif s={17} />
        </div>
      </div>
    </div>
  );
}

function OuterTaskbar() {
  return (
    <div className="flex h-[40px] bg-[linear-gradient(to_right,#10222b,#152228_40%,#1a1a1c_65%,#10222a)]">
      <div className="mr-[2px] flex w-[144px] shrink-0 justify-around">
        {[icons.win, icons.search, icons.view].map((ic, i) => (
          <div key={i} className="flex w-[48px] items-center justify-center">
            <TI s={i ? 19 : 23}>{ic}</TI>
          </div>
        ))}
      </div>
      {apps("outer")}
      <Slot size="outer" icon={icons.s} mark active />
      <div className="flex flex-1 items-center pl-[247px]">
        <TI s={17}>{icons.people}</TI>
        <div className="ml-[21px] flex w-[134px] items-center justify-between">
          <TI s={14}>{icons.chevron}</TI>
          <TI s={17}>{icons.monitor}</TI>
          <TI s={17}>{icons.cloud}</TI>
          <TI s={17}>{icons.blueCloud}</TI>
          <TI s={16}>{icons.battery}</TI>
          <TI s={15}>{icons.mute}</TI>
        </div>
        <Fit w={18} className="ml-[13px] text-[11px] text-white">ESP</Fit>
        <div className="ml-[16px] flex w-[58px] flex-col items-center text-[11.500px] leading-[18px] text-white">
          <Fit w={27}>12:15</Fit>
          <Fit w={58}>18-12-2018</Fit>
        </div>
        <div className="ml-[17px]">
          <Notif s={19} />
        </div>
        <div className="mr-[3px] ml-auto h-full w-px bg-[#4a5256]" />
      </div>
    </div>
  );
}

function PlayerBar() {
  const hot = "flex h-[18px] w-[18px] items-center justify-center rounded-[3px] border border-[#9a5a1c] bg-[linear-gradient(#fffdf0_40%,#fbe36a_60%,#fff3b0)]";
  return (
    <div className="flex h-[20px] items-center bg-[#dcdcdc]">
      <div className="flex h-full w-[120px] items-center bg-[linear-gradient(#fdfdfd,#cfcfcf)] pl-[5px]">
        <svg className="block" width="12" height="12" viewBox="0 0 12 12">
          <path d="M0 0l12 6-12 6z" />
        </svg>
        <div className={`${hot} ml-[4px]`}>
          <svg className="block" width="10" height="14" viewBox="0 0 10 14">
            <path d="M1 1h3v12H1zM6 1h3v12H6z" />
          </svg>
        </div>
        <svg className="ml-[6px] block" width="12" height="10" viewBox="0 0 12 10">
          <path d="M0 0l6 5-6 5zM6 0l6 5-6 5z" />
        </svg>
        <svg className="ml-[9px] block" width="10" height="10" viewBox="0 0 10 10">
          <path d="M0 0h2v10H0zM3 0l6 5-6 5z" />
        </svg>
        <div className={`${hot} ml-[5px]`}>
          <svg className="block" width="13" height="13" viewBox="0 0 13 13" fill="none" stroke="#000">
            <path d="M.5.500h12v12H.5z" />
            <path d="M3 5V3h2M8 3h2v2M10 8v2H8M5 10H3V8M3 3l7 7M10 3l-7 7" strokeDasharray="3 1.500" />
          </svg>
        </div>
        <svg className="ml-[5px] block" width="11" height="13" viewBox="0 0 11 13" fill="none" stroke="#000">
          <path d="M.5.500h10v12H.5zM3.500 3v7M2.500 4h1M7.500 3v7M6.500 4h1M5.500 5v1M5.500 8v1" />
        </svg>
      </div>
      <div className="flex h-full w-[100px] items-center justify-center bg-[linear-gradient(110deg,#fffef2,#f7f4b4)] pl-[1px] font-['Liberation_Sans'] text-black">
        <Fit w={53} className="text-[10px]">00:23/02:19</Fit>
      </div>
      <div className="ml-[10px] flex w-[1106px] items-center">
        <div className="h-[4px] w-[173px] border-t border-[#333] bg-[#8f8f8f]" />
        <div className="h-[9px] w-[16px] rounded-[3px] border border-[#333] bg-[linear-gradient(#fff,#ddd_50%,#777)]" />
        <div className="h-[4px] flex-1 border-t border-[#333] bg-[#8f8f8f]" />
      </div>
      <svg className="ml-auto block" width="16" height="16" viewBox="0 0 16 16">
        <circle cx="6" cy="8" r="6" fill="#000" />
        <path d="M6 3v2.500M6 7v6" stroke="#fff" strokeWidth="2.200" />
      </svg>
    </div>
  );
}

/* ---------- annotations over the page ---------- */

function Annotations() {
  return (
    <>
      <div className="absolute top-[326px] left-[553px] h-[17px] w-[113px] border border-[#9b8f8e] bg-[#f3dedc]/65 pl-[4px] text-[11px] leading-[15px] text-[#7a4f4e] shadow-[2px_2px_2px_rgba(0,0,0,0.300)]">
        <Fit w={103}>Asignar Distribuidores</Fit>
      </div>
      <svg className="absolute top-[302px] left-[552px]" width="14" height="20" viewBox="0 0 14 20">
        <path d="M1 1v14l3-3 2.500 6 2.500-1-2.500-6H11z" fill="#fff" stroke="#000" />
      </svg>
      <svg className="absolute top-[125px] left-[570px]" width="205" height="190" viewBox="570 125 205 190">
        <defs>
          <filter id="soft" x="-20%" y="-20%" width="140%" height="140%">
            <feGaussianBlur stdDeviation="1.500" />
          </filter>
        </defs>
        <g filter="url(#soft)" opacity=".4" transform="translate(4 5)">
          <path d="M753 133L594 287" stroke="#000" strokeWidth="4" />
          <path d="M580 300l7.500-21 13.500 14z" />
        </g>
        <path d="M753.500 133L594 287" stroke="#fb0505" strokeWidth="4.200" />
        <path d="M580 300.500l7.300-21.500 13.700 14.500z" fill="#fb0505" />
      </svg>
    </>
  );
}

export default function App() {
  return (
    <div className="relative flex h-[768px] w-[1366px] flex-col overflow-hidden bg-black font-['Open_Sans','Noto_Sans',sans-serif]">
      <div className="flex h-[23px] shrink-0 items-center bg-white pl-[2px]">
        <TI s={16}>{icons.s}</TI>
        <Fit w={39} className="ml-[5px] text-[11.500px] text-black">Untittle</Fit>
        <WinControls className="mr-[19px] mb-[3px] ml-auto" />
      </div>
      <div className="ml-[74px] flex h-[685px] w-[1213px] shrink-0 flex-col overflow-hidden bg-[#f9fefa]">
        <BrowserTabs />
        <Toolbar />
        <div className="flex h-[586px] overflow-hidden">
          <div className="flex w-[1204px] flex-col">
            <PageHeader />
            <div className="mt-[6px] flex flex-1 overflow-hidden">
              <Sidebar />
              <MainPanel />
            </div>
          </div>
          <div className="flex w-[9px] flex-col items-center bg-[#f0f1f0]">
            <svg className="mt-[6px] block" width="7" height="4" viewBox="0 0 7 4">
              <path d="M0 4l3.500-4L7 4z" fill="#999" />
            </svg>
            <div className="mt-[5px] h-[457px] w-full bg-[#bfc1c0]" />
            <svg className="mt-auto mb-[6px] block" width="7" height="4" viewBox="0 0 7 4">
              <path d="M0 0l3.500 4L7 0z" fill="#555" />
            </svg>
          </div>
        </div>
        <InnerTaskbar />
      </div>
      <PlayerBar />
      <OuterTaskbar />
      <Annotations />
    </div>
  );
}
